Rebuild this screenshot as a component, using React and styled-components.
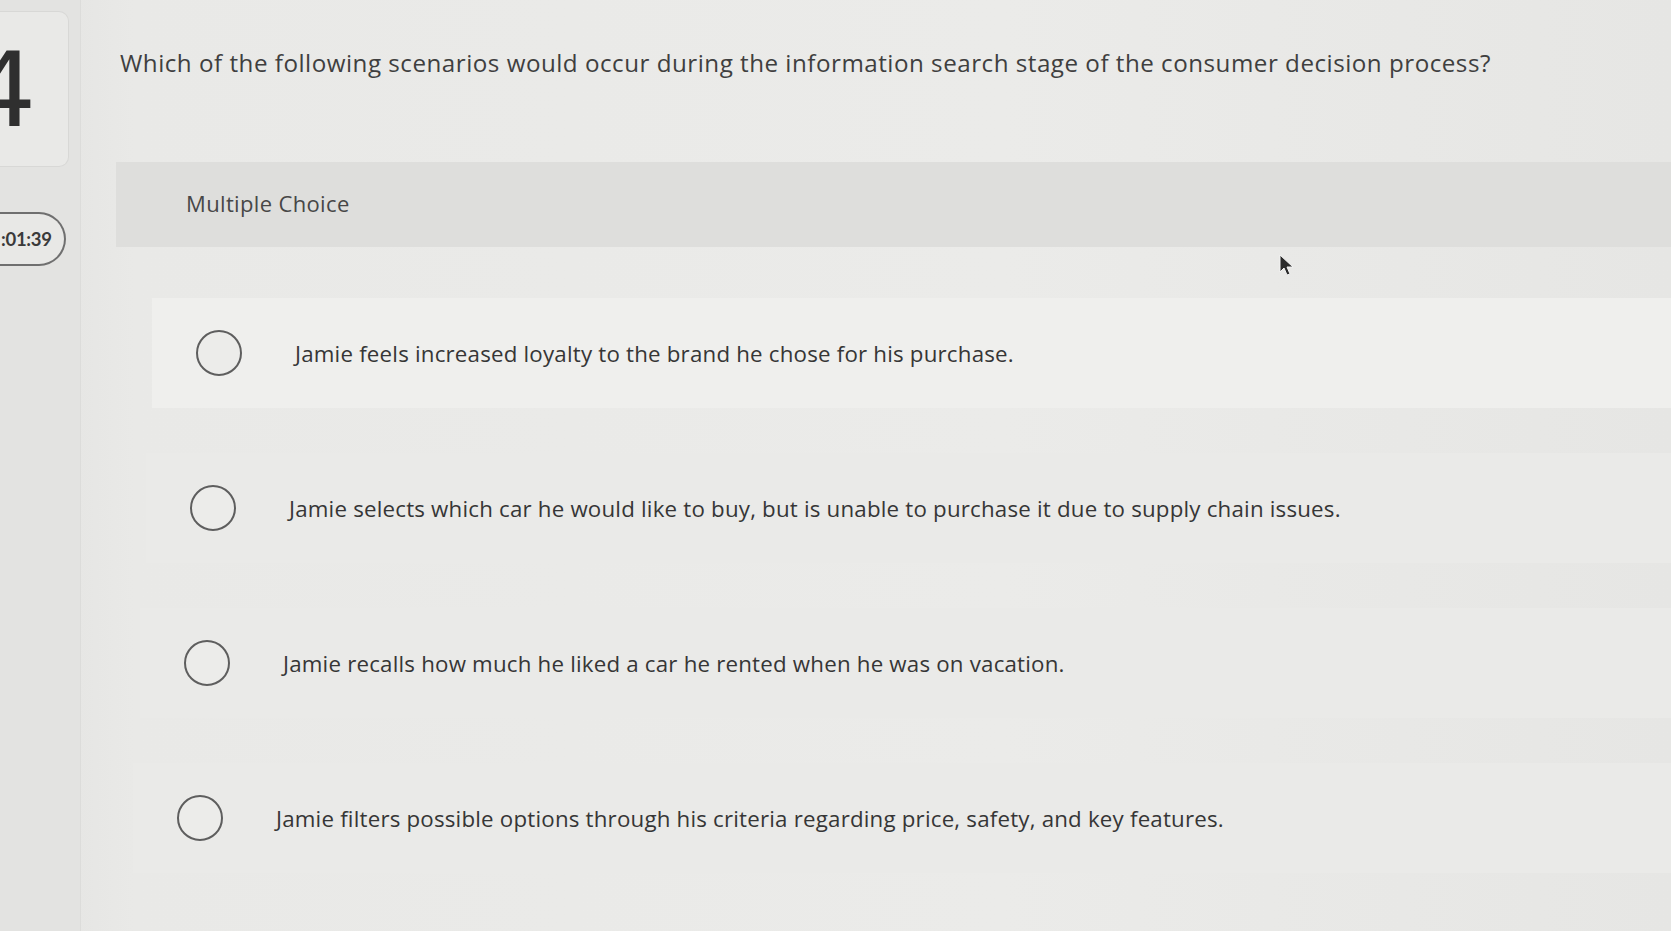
import React from "react";
import styled, { createGlobalStyle } from "styled-components";

const GlobalStyle = createGlobalStyle`
  html, body {
    margin: 0;
    padding: 0;
    background: #e7e7e5;
  }
  body {
    font-family: "Open Sans", "Noto Sans", sans-serif;
    color: #3d3d3d;
  }
`;

const Page = styled.div`
  position: relative;
  display: flex;
  width: 1671px;
  height: 931px;
  overflow: hidden;
  background: linear-gradient(90deg, #e2e2e0 0%, #e9e9e7 8%, #ebebe9 60%, #e6e6e4 100%);
`;

const Sidebar = styled.aside`
  width: 80px;
  flex-shrink: 0;
  display: flex;
  flex-direction: column;
  padding-top: 11px;
  background: #e3e3e1;
  border-right: 1px solid #dcdcda;
`;

const NumberCard = styled.div`
  width: 68px;
  height: 154px;
  overflow: hidden;
  border: 1px solid #d8d8d6;
  border-left: none;
  border-radius: 0 10px 10px 0;
  background: #e9e9e7;
  display: flex;
  align-items: flex-start;
`;

const BigNumber = styled.span`
  font-family: "DejaVu Sans", sans-serif;
  font-size: 104px;
  font-weight: 400;
  line-height: 1;
  color: #2f2f2f;
  margin-left: -30px;
  margin-top: 26px;
`;

const Timer = styled.div`
  margin-top: 45px;
  width: 66px;
  height: 54px;
  box-sizing: border-box;
  border: 2px solid #6f6f6f;
  border-left: none;
  border-radius: 0 28px 28px 0;
  display: flex;
  align-items: center;
  overflow: hidden;
  font-family: "Lato", sans-serif;
  font-size: 18.5px;
  font-weight: 700;
  color: #3a3a3a;
  background: #e8e8e6;
`;

const TimerText = styled.span`
  margin-left: 1px;
  letter-spacing: -0.3px;
`;

const Main = styled.main`
  flex: 1;
  display: flex;
  flex-direction: column;
  padding-top: 46px;
`;

const Question = styled.h1`
  margin: 0 0 0 39px;
  font-size: 24.2px;
  font-weight: 400;
  line-height: 34px;
  letter-spacing: 0.5px;
  color: #3f3f3f;
  white-space: nowrap;
`;

const Header = styled.div`
  margin: 82px 0 0 35px;
  height: 85px;
  background: #dededc;
  display: flex;
  align-items: center;
  padding-left: 70px;
  padding-bottom: 3px;
  box-sizing: border-box;
  font-size: 22px;
  letter-spacing: 0.35px;
  color: #474747;
`;

const Options = styled.div`
  display: flex;
  flex-direction: column;
  gap: 45px;
  margin-top: 51px;
`;

const Option = styled.label`
  display: flex;
  align-items: center;
  height: 110px;
  margin-left: ${(p) => p.$shift}px;
  padding-left: 44px;
  gap: 53px;
  background: ${(p) => (p.$light ? "#efefed" : "#eaeae8")};
  cursor: pointer;
`;

const Radio = styled.span`
  width: 46px;
  height: 46px;
  flex-shrink: 0;
  box-sizing: border-box;
  border: 2px solid #5e5e5e;
  border-radius: 50%;
  background: #ececea;
`;

const OptionText = styled.span`
  font-size: 22.3px;
  letter-spacing: 0.2px;
  color: #363636;
  white-space: nowrap;
`;

const Cursor = styled.svg`
  position: absolute;
  left: 1279px;
  top: 254px;
  width: 16px;
  height: 24px;
`;

const options = [
  { text: "Jamie feels increased loyalty to the brand he chose for his purchase.", shift: 71, light: true },
  { text: "Jamie selects which car he would like to buy, but is unable to purchase it due to supply chain issues.", shift: 65 },
  { text: "Jamie recalls how much he liked a car he rented when he was on vacation.", shift: 59 },
  { text: "Jamie filters possible options through his criteria regarding price, safety, and key features.", shift: 52 },
];

export default function App() {
  return (
    <>
      <GlobalStyle />
      <Page>
        <Sidebar>
          <NumberCard>
            <BigNumber>4</BigNumber>
          </NumberCard>
          <Timer>
            <TimerText>:01:39</TimerText>
          </Timer>
        </Sidebar>
        <Main>
          <Question>
            Which of the following scenarios would occur during the information search stage of the consumer decision process?
          </Question>
          <Header>Multiple Choice</Header>
          <Options>
            {options.map((o) => (
              <Option key={o.text} $shift={o.shift} $light={o.light}>
                <Radio />
                <OptionText>{o.text}</OptionText>
              </Option>
            ))}
          </Options>
        </Main>
        <Cursor viewBox="0 0 16 24">
          <path d="M1 1 L1 18 L5 14 L8 21 L11 20 L8 13 L14 13 Z" fill="#2b2b2b" stroke="#f2f2f2" strokeWidth="1" />
        </Cursor>
      </Page>
    </>
  );
}
